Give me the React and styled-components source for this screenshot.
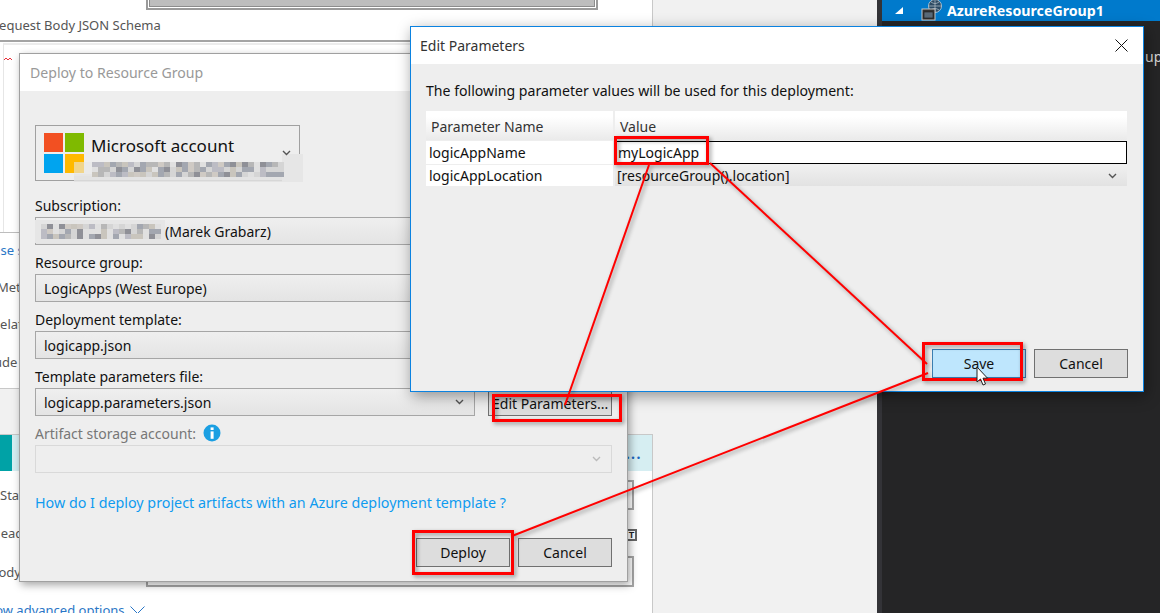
import React from "react";
import styled, { createGlobalStyle } from "styled-components";

const uiFont = `"Noto Sans", "Open Sans", "Liberation Sans", sans-serif`;

const GlobalStyle = createGlobalStyle`
  html, body {
    margin: 0;
    padding: 0;
    overflow: hidden;
    background: #f1f1f1;
    font-family: ${uiFont};
  }
  * {
    box-sizing: border-box;
  }
`;

const Desktop = styled.div`
  position: relative;
  display: flex;
  width: 1160px;
  height: 613px;
  overflow: hidden;
  font-size: 14px;
`;

/* page behind the dialogs */
const LeftPanel = styled.div`
  display: flex;
  flex-direction: column;
  width: 653px;
  flex-shrink: 0;
  font-size: 13px;
`;

const TopSection = styled.div`
  flex-shrink: 0;
  height: 389px;
  background: #fff;
  border-right: 1px solid #c8c8c8;
  border-bottom: 1px solid #c8c8c8;
  overflow: hidden;
`;

const SchemaBox = styled.div`
  width: 452px;
  height: 10px;
  margin-left: 146px;
  padding: 0 1px 1px;
  border: 2px solid #9a9a9a;
  border-top: 0;
  background: #fff;

  div {
    height: 100%;
    background: #bdbdbd;
    border: 1px solid #8c8c8c;
    border-top: 0;
  }
`;

const SectionLabel = styled.div`
  height: 30px;
  line-height: 30px;
  margin-left: -9px;
  color: #555;
  white-space: nowrap;
`;

const EditorBox = styled.div`
  height: 193px;
  padding: 1px 0 0 3px;
  border-top: 2px solid #a4a4a4;
  border-bottom: 1px solid #bdbdbd;
`;

const EditorInner = styled.div`
  height: 100%;
  padding-top: 12px;
  border-left: 1px solid #e6e6e6;
  border-top: 2px solid #ececec;
`;

const Squiggle = styled.svg`
  display: block;
`;

const FragmentRow = styled.div`
  height: 37.4px;
  padding-bottom: 4px;
  display: flex;
  align-items: center;
  margin-left: ${(p) => p.$shift}px;
  color: ${(p) => (p.$link ? "#2a76c6" : "#555")};
  white-space: nowrap;
`;

const Band = styled.div`
  flex-shrink: 0;
  height: 45px;
  background: #f1f1f1;
`;

const Card = styled.div`
  flex: 1;
  min-height: 0;
  background: #fff;
  border-top: 1px solid #c8c8c8;
  border-right: 1px solid #c8c8c8;
`;

const CardHeader = styled.div`
  display: flex;
  justify-content: flex-end;
  align-items: center;
  height: 36px;
  padding-right: 10px;
  background: linear-gradient(to right, #00a2a6 12px, #d6eef2 12px);
  color: #1a66c0;
  font-size: 14px;
  font-weight: 700;
  letter-spacing: 1.5px;
`;

const CardGrid = styled.div`
  display: grid;
  grid-template-columns: 146px 488px;
  grid-template-rows: 30px 46px 31px;
  margin-top: 9px;
`;

const CardLabel = styled.div`
  align-self: center;
  margin-left: ${(p) => p.$shift}px;
  color: #555;
  white-space: nowrap;
`;

const CardInput = styled.div`
  border: 2px solid #a6a6a6;
  background: #fff;
`;

const CardIconCell = styled.div`
  display: flex;
  justify-content: flex-end;
  align-items: center;
`;

const TextIcon = styled.span`
  display: flex;
  align-items: center;
  justify-content: center;
  width: 11px;
  height: 12px;
  margin: 4px -3px 0 0;
  border: 2px solid #666;
  font: 700 9px "Liberation Sans", sans-serif;
  color: #222;
`;

const AdvancedRow = styled.div`
  display: flex;
  align-items: center;
  gap: 5px;
  height: 20px;
  margin: 13px 0 0 -20px;
  color: #2a76c6;
  white-space: nowrap;
`;

const MiddlePanel = styled.div`
  width: 224px;
  flex-shrink: 0;
  background: #f1f1f1;
`;

const DarkPanel = styled.div`
  flex: 1;
  background: #252526;
  border-left: 5px solid #333337;
  color: #d8d8d8;
`;

const TreeRow = styled.div`
  display: flex;
  align-items: center;
  height: 21px;
  padding-left: 13px;
  gap: 17px;
  background: #007acc;
  color: #fff;
  font-weight: 700;
  font-size: 14.2px;
  white-space: nowrap;
  overflow: hidden;
`;

const TreeGlyph = styled.span`
  display: flex;
  align-items: center;
  gap: 5px;
`;

const TreeChild = styled.div`
  margin-top: 26px;
  padding-left: 263px;
  line-height: 20px;
  white-space: nowrap;
`;

/* dialogs */
const Window = styled.div`
  position: absolute;
  left: ${(p) => p.$left}px;
  top: ${(p) => p.$top}px;
  width: ${(p) => p.$width}px;
  height: ${(p) => p.$height}px;
  display: flex;
  flex-direction: column;
  background: #eeeeee;
  border: 1px solid ${(p) => p.$border};
  box-shadow: ${(p) => p.$shadow};
`;

const TitleBar = styled.div`
  display: flex;
  align-items: center;
  justify-content: space-between;
  flex-shrink: 0;
  height: ${(p) => p.$height}px;
  padding: 0 15px 0 ${(p) => p.$pad}px;
  background: #fff;
  color: ${(p) => p.$color};
  font-size: ${(p) => p.$size}px;
`;

const DeployBody = styled.div`
  flex: 1;
  display: flex;
  flex-direction: column;
  padding: 34px 15px 0;
`;

const AccountBox = styled.div`
  position: relative;
  display: flex;
  width: 265px;
  height: 56px;
  margin-bottom: 7px;
  padding: 7px 0 0 8px;
  gap: 7px;
  border: 1px solid #a0a0a0;
  background: #eeeeee;
`;

const AccountName = styled.div`
  font-size: 17px;
  line-height: 25px;
  color: #111;
`;

const AccountMosaic = styled.svg`
  position: absolute;
  left: 38px;
  top: 28px;
`;

const AccountChevron = styled.svg`
  position: absolute;
  right: 8px;
  top: 24px;
`;

const Field = styled.div`
  display: flex;
  flex-direction: column;
`;

const FieldLabel = styled.label`
  display: flex;
  align-items: center;
  gap: 7px;
  height: 29px;
  padding-top: 5px;
  color: ${(p) => (p.$disabled ? "#777" : "#111")};
  font-size: 14px;
  white-space: nowrap;
`;

const Combo = styled.div`
  display: flex;
  align-items: center;
  justify-content: space-between;
  height: 28px;
  padding: 0 10px 0 8px;
  border: 1px solid ${(p) => (p.$disabled ? "#d9d9d9" : "#a6a6a6")};
  background: ${(p) => (p.$disabled ? "#eeeeee" : "linear-gradient(#efefef, #e4e4e4)")};
  color: #111;
  white-space: nowrap;
`;

const ComboValue = styled.span`
  display: flex;
  align-items: center;
`;

const SubscriptionMosaic = styled.svg`
  margin-left: -9px;
`;

const FieldRow = styled.div`
  display: flex;
  align-items: flex-end;
  gap: 13px;

  ${Field} {
    width: 441px;
  }
`;

const Button = styled.button`
  width: ${(p) => p.$width}px;
  height: ${(p) => p.$height}px;
  padding: 0;
  border: 1px solid ${(p) => (p.$hover ? "#3c7fb1" : "#707070")};
  background: ${(p) => (p.$hover ? "#bee6fd" : "#dddddd")};
  color: #111;
  font: 14px ${uiFont};
`;

const HelpLink = styled.a`
  margin-top: 20px;
  line-height: 20px;
  color: #0e9bf0;
  font-size: 14.3px;
  white-space: nowrap;
`;

const ButtonRow = styled.div`
  display: flex;
  justify-content: flex-end;
  gap: 8px;
  margin-top: ${(p) => p.$top || 0};
`;

const EditBody = styled.div`
  flex: 1;
  display: flex;
  flex-direction: column;
  padding: 17px 15px 13px;
`;

const Intro = styled.div`
  line-height: 20px;
  font-size: 14.1px;
  color: #111;
`;

const ParamTable = styled.div`
  display: grid;
  grid-template-columns: 187px 512px;
  grid-template-rows: 29px 23px 21px;
  gap: 1px 2px;
  width: 701px;
  margin-top: 10px;
`;

const HeaderCell = styled.div`
  display: flex;
  align-items: center;
  padding: 2px 0 0 ${(p) => p.$pad}px;
  background: linear-gradient(#fff 20%, #eaeaea);
  color: #333;
`;

const NameCell = styled.div`
  display: flex;
  align-items: center;
  padding-left: 3px;
  background: #fff;
  color: #111;
`;

const ValueInput = styled.div`
  display: flex;
  align-items: center;
  padding-left: 2px;
  background: #fff;
  border: 1px solid #000;
  color: #111;
`;

const ValueCombo = styled.div`
  display: flex;
  align-items: center;
  justify-content: space-between;
  padding: 0 10px 0 2px;
  background: linear-gradient(#f0f0f0, #e2e2e2);
  color: #111;
`;

/* red annotations drawn on top of the screenshot */
const Annotations = styled.svg`
  position: absolute;
  left: 0;
  top: 0;
  pointer-events: none;
`;

const Chevron = ({ color = "#555" }) => (
  <svg width="9" height="6" viewBox="0 0 9 6" fill="none" stroke={color} strokeWidth="1.4">
    <path d="M1 1l3.500 3.500L8 1" />
  </svg>
);

const MicrosoftLogo = () => (
  <svg width="40" height="40" viewBox="0 0 40 40" style={{ flexShrink: 0 }}>
    <rect x="0" y="0" width="19" height="19" fill="#f25022" />
    <rect x="21" y="0" width="19" height="19" fill="#7fba00" />
    <rect x="0" y="21" width="19" height="19" fill="#00a4ef" />
    <rect x="21" y="21" width="19" height="19" fill="#ffb900" />
  </svg>
);

const InfoIcon = () => (
  <svg width="18" height="18" viewBox="0 0 18 18">
    <circle cx="9" cy="9" r="8.500" fill="#1b9fe2" />
    <rect x="7.600" y="7.400" width="3" height="7.400" fill="#fff" />
    <rect x="7.600" y="3.400" width="3" height="2.600" fill="#fff" />
  </svg>
);

const CloseIcon = () => (
  <svg width="13" height="13" viewBox="0 0 13 13" stroke="#111" strokeWidth="1" fill="none">
    <path d="M.5.5l12 12M12.500.5l-12 12" />
  </svg>
);

const ResourceGroupIcon = () => (
  <svg width="21" height="21" viewBox="0 0 21 21">
    <circle cx="14" cy="6" r="6.500" fill="#2c4a63" stroke="#cfd8de" strokeWidth="0.8" />
    <path d="M14 0v12M8 6h12M10 2c3 2 5 2 8 0M10 10c3-2 5-2 8 0" stroke="#a9b7c2" strokeWidth="0.8" fill="none" />
    <rect x="1" y="9" width="13" height="11" fill="#333" stroke="#c8c8c8" />
    <rect x="3" y="12" width="9" height="6" fill="#5a6a78" stroke="#1c1c1c" strokeWidth="0.6" />
  </svg>
);

// blocky stand-in for the pixelated e-mail and subscription id
const palette = ["#b7b7b7", "#a3a7b0", "#c9c5bd", "#8f9097", "#d5d5d5", "#bcbcc4", "#cfcac4", "#e0e0e0"];

const mosaicCells = (cols, rows, seed) => {
  const cells = [];
  let n = seed;
  for (let y = 0; y < rows; y++) {
    for (let x = 0; x < cols; x++) {
      n = (n * 137 + 59) % 1009;
      cells.push({ x: x * 6, y: y * 5, fill: palette[n % palette.length] });
    }
  }
  return cells;
};

const emailCells = mosaicCells(32, 3, 11);
const subscriptionCells = mosaicCells(20, 3, 47);

const EmailMosaic = () => (
  <AccountMosaic width="229" height="29" viewBox="0 0 229 29">
    <rect x="0" y="20" width="229" height="8" fill="#e0e0e0" fillOpacity="0.85" />
    <rect x="0" y="8" width="18" height="14" fill="#e8e8e8" fillOpacity="0.6" />
    <rect x="208" y="0" width="21" height="28" fill="#e6e6e6" />
    <g transform="translate(18 8)">
      {emailCells.map((c, i) => (
        <rect key={i} x={c.x} y={c.y} width="6" height="5" fill={c.fill} />
      ))}
    </g>
  </AccountMosaic>
);

const IdMosaic = () => (
  <SubscriptionMosaic width="130" height="23" viewBox="0 0 130 23">
    <rect width="130" height="23" fill="#e6e6e6" />
    <g transform="translate(6 4)">
      {subscriptionCells.map((c, i) => (
        <rect key={i} x={c.x} y={c.y} width="6" height="5" fill={c.fill} />
      ))}
    </g>
  </SubscriptionMosaic>
);

const backgroundFields = [
  { text: "Use sample payload", shift: -9, link: true },
  { text: "Method", shift: -3 },
  { text: "Relative path", shift: -8 },
  { text: "Include a", shift: -28 },
];

const deployFields = [
  { label: "Resource group:", value: "LogicApps (West Europe)" },
  { label: "Deployment template:", value: "logicapp.json" },
];

export default function App() {
  return (
    <Desktop>
      <GlobalStyle />

      <LeftPanel>
        <TopSection>
          <SchemaBox>
            <div />
          </SchemaBox>
          <SectionLabel>Request Body JSON Schema</SectionLabel>
          <EditorBox>
            <EditorInner>
              <Squiggle width="10" height="4" viewBox="0 0 10 4" fill="none" stroke="#e8303a" strokeWidth="1">
                <path d="M0 3l2-2 2 2 2-2 2 2" />
              </Squiggle>
            </EditorInner>
          </EditorBox>
          {backgroundFields.map((f) => (
            <FragmentRow key={f.text} $shift={f.shift} $link={f.link}>
              {f.text}
            </FragmentRow>
          ))}
        </TopSection>
        <Band />
        <Card>
          <CardHeader>...</CardHeader>
          <CardGrid>
            <CardLabel $shift={0}>Status</CardLabel>
            <CardInput />
            <CardLabel $shift={-9}>Headers</CardLabel>
            <CardIconCell>
              <TextIcon>T</TextIcon>
            </CardIconCell>
            <CardLabel $shift={-10}>Body</CardLabel>
            <CardInput />
          </CardGrid>
          <AdvancedRow>
            Show advanced options
            <svg width="15" height="8" viewBox="0 0 15 8" fill="none" stroke="#2a76c6">
              <path d="M.5.5l7 7 7-7" />
            </svg>
          </AdvancedRow>
        </Card>
      </LeftPanel>

      <MiddlePanel />

      <DarkPanel>
        <TreeRow>
          <svg width="9" height="7" viewBox="0 0 9 7">
            <path d="M8 0v7H0z" fill="#fff" />
          </svg>
          <TreeGlyph>
            <ResourceGroupIcon />
            AzureResourceGroup1
          </TreeGlyph>
        </TreeRow>
        <TreeChild>up</TreeChild>
      </DarkPanel>

      <Window
        $left={19}
        $top={53}
        $width={609}
        $height={529}
        $border="#a0a0a0"
        $shadow="2px 3px 8px rgba(0,0,0,0.35)"
      >
        <TitleBar $height={37} $pad={10} $color="#999" $size={14.1}>
          Deploy to Resource Group
        </TitleBar>
        <DeployBody>
          <AccountBox>
            <MicrosoftLogo />
            <AccountName>Microsoft account</AccountName>
            <EmailMosaic />
            <AccountChevron width="9" height="6" viewBox="0 0 9 6" fill="none" stroke="#555" strokeWidth="1.4">
              <path d="M1 1l3.500 3.500L8 1" />
            </AccountChevron>
          </AccountBox>
          <Field>
            <FieldLabel>Subscription:</FieldLabel>
            <Combo>
              <ComboValue>
                <IdMosaic />
                (Marek Grabarz)
              </ComboValue>
              <Chevron />
            </Combo>
          </Field>
          {deployFields.map((f) => (
            <Field key={f.label}>
              <FieldLabel>{f.label}</FieldLabel>
              <Combo>
                <ComboValue>{f.value}</ComboValue>
                <Chevron />
              </Combo>
            </Field>
          ))}
          <FieldRow>
            <Field>
              <FieldLabel>Template parameters file:</FieldLabel>
              <Combo>
                <ComboValue>logicapp.parameters.json</ComboValue>
                <Chevron />
              </Combo>
            </Field>
            <Button $width={124} $height={25}>
              Edit Parameters...
            </Button>
          </FieldRow>
          <Field>
            <FieldLabel $disabled>
              Artifact storage account:
              <InfoIcon />
            </FieldLabel>
            <Combo $disabled>
              <span />
              <Chevron color="#bbb" />
            </Combo>
          </Field>
          <HelpLink>How do I deploy project artifacts with an Azure deployment template ?</HelpLink>
          <ButtonRow $top="25px">
            <Button $width={94} $height={29}>
              Deploy
            </Button>
            <Button $width={94} $height={29}>
              Cancel
            </Button>
          </ButtonRow>
        </DeployBody>
      </Window>

      <Window
        $left={410}
        $top={26}
        $width={734}
        $height={366}
        $border="#0b82e0"
        $shadow="2px 4px 14px rgba(0,0,0,0.4)"
      >
        <TitleBar $height={37} $pad={9} $color="#333" $size={14}>
          Edit Parameters
          <CloseIcon />
        </TitleBar>
        <EditBody>
          <Intro>The following parameter values will be used for this deployment:</Intro>
          <ParamTable>
            <HeaderCell $pad={5}>Parameter Name</HeaderCell>
            <HeaderCell $pad={5}>Value</HeaderCell>
            <NameCell>logicAppName</NameCell>
            <ValueInput>myLogicApp</ValueInput>
            <NameCell>logicAppLocation</NameCell>
            <ValueCombo>
              [resourceGroup().location]
              <Chevron />
            </ValueCombo>
          </ParamTable>
          <ButtonRow $top="auto">
            <Button $width={94} $height={29} $hover>
              Save
            </Button>
            <Button $width={94} $height={29}>
              Cancel
            </Button>
          </ButtonRow>
        </EditBody>
      </Window>

      <Annotations width="1160" height="613" viewBox="0 0 1160 613">
        <g fill="none" stroke="#f00" style={{ filter: "drop-shadow(2px 2px 2px rgba(0,0,0,0.4))" }}>
          <g strokeWidth="3">
            <rect x="615.5" y="137.5" width="92" height="26" />
            <rect x="493.5" y="395.5" width="127" height="25" />
            <rect x="413.5" y="531.5" width="99" height="42" />
            <rect x="923.5" y="343.5" width="98" height="36" />
          </g>
          <g strokeWidth="2">
            <path d="M649 165L565 405" />
            <path d="M710 163L927 364" />
            <path d="M928 373L512 536" />
          </g>
        </g>
        <path
          d="M977 367v15l3.500-3 2.500 6 2.500-1-2.500-5.800h4.500z"
          fill="#fff"
          stroke="#222"
          strokeWidth="1"
        />
      </Annotations>
    </Desktop>
  );
}
